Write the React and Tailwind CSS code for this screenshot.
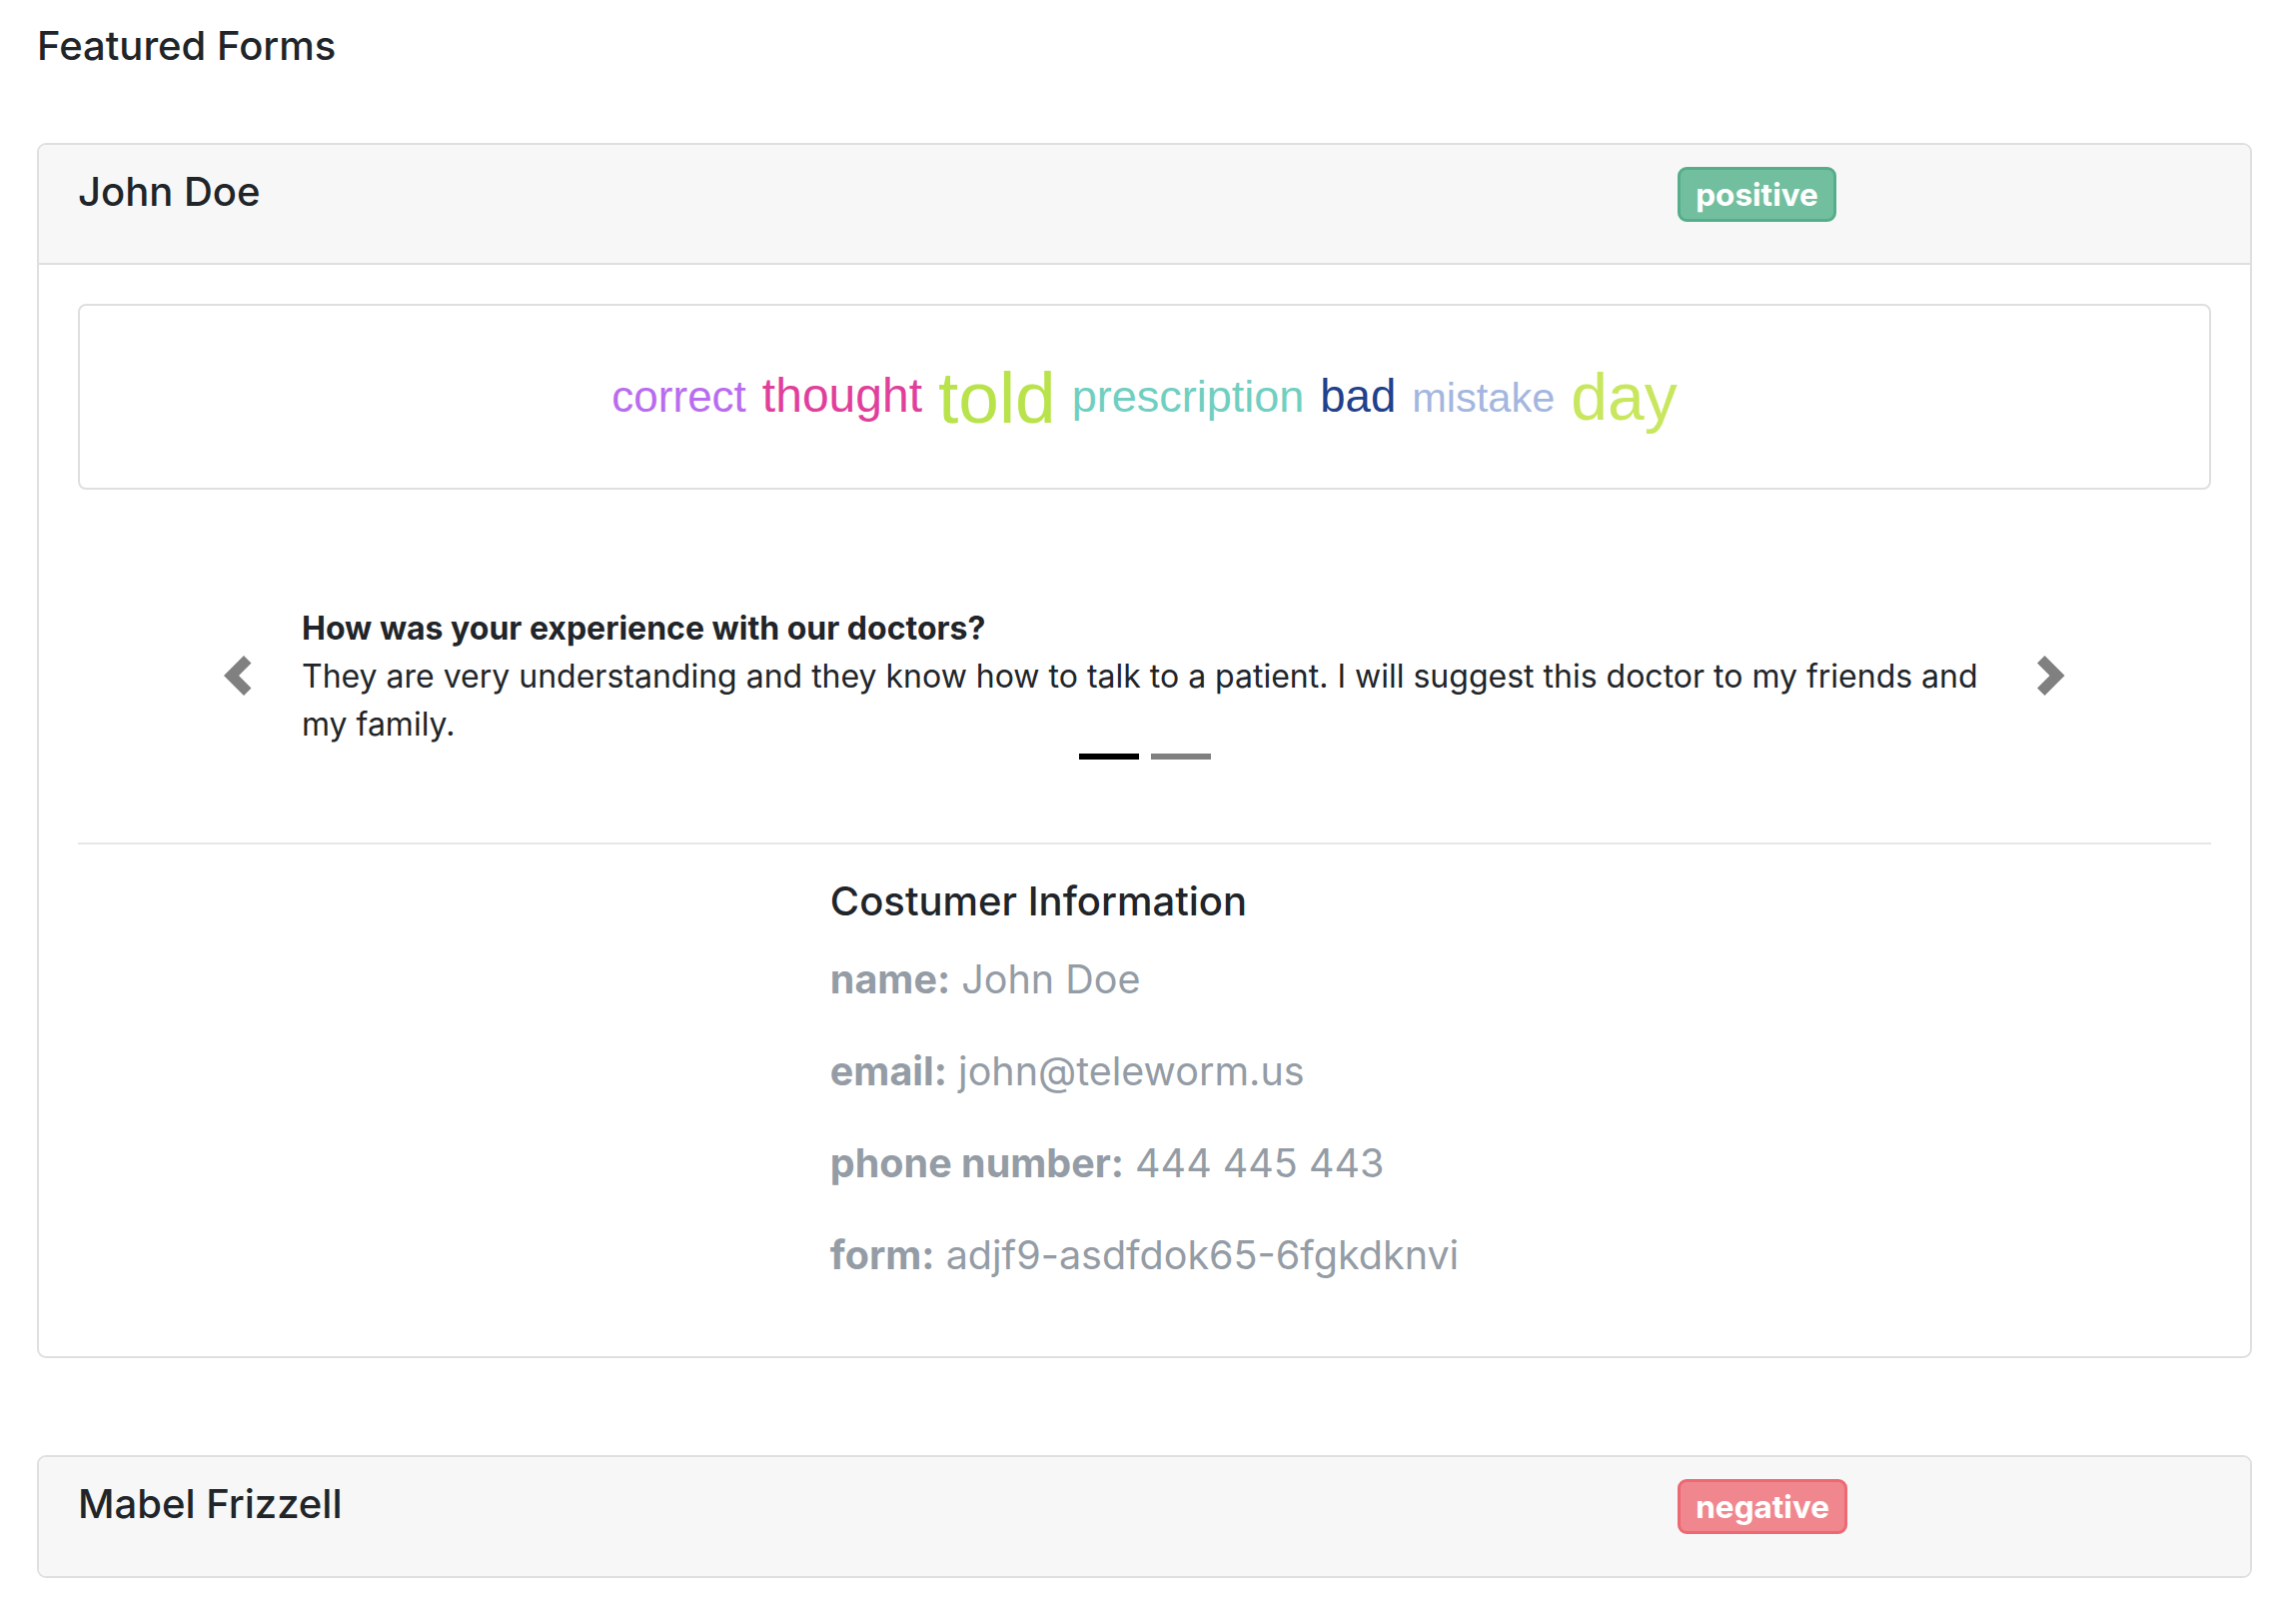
import React from "react";

const words = [
  { text: "correct", size: 44, color: "text-[#b96cf0]", shift: "" },
  { text: "thought", size: 48, color: "text-[#e0409b]", shift: "" },
  { text: "told", size: 73, color: "text-[#b8e34b]", shift: "relative top-[11px]" },
  { text: "prescription", size: 45, color: "text-[#70cfc0]", shift: "" },
  { text: "bad", size: 45.5, color: "text-[#22418c]", shift: "" },
  { text: "mistake", size: 41.5, color: "text-[#a4b6e0]", shift: "" },
  { text: "day", size: 66, color: "text-[#c8e75f]", shift: "relative top-[8px]" },
];

function Chevron({ dir }) {
  const d =
    dir === "left"
      ? "M5.25 0l-4 4 4 4 1.5-1.5L4.25 4l2.5-2.5L5.25 0z"
      : "M2.75 0l-1.5 1.5L3.75 4l-2.5 2.5L2.75 8l4-4-4-4z";
  return (
    <svg viewBox="1.25 0 5.5 8" width="27.5" height="40" fill="#808080">
      <path d={d} />
    </svg>
  );
}

function Badge({ label, tone }) {
  const cls =
    tone === "positive"
      ? "bg-[#72bf9f] border-[#55ae89]"
      : "bg-[#f0878f] border-[#ec6873]";
  return (
    <span
      className={`inline-flex h-[55px] items-center rounded-[9px] border-[3px] px-[15px] text-[31.5px] font-bold text-white ${cls}`}
    >
      {label}
    </span>
  );
}

function CardHeader({ name, tone, bordered }) {
  return (
    <div
      className={`flex items-start bg-[#f7f7f7] px-[39px] pt-[23px] ${
        bordered ? "h-[120px] border-b-2 border-[#dfdfdf]" : "h-[119px]"
      }`}
    >
      <div className="w-3/4 flex-none text-[40px] leading-[48px] font-medium text-[#212529]">
        {name}
      </div>
      <div className="-mt-[1px]">
        <Badge label={tone} tone={tone} />
      </div>
    </div>
  );
}

export default function App() {
  return (
    <div
      className="min-h-screen bg-white pl-[37px] pr-[44px] pt-[22px] pb-[40px] text-[#212529]"
      style={{ fontFamily: "Inter, 'Noto Sans', sans-serif" }}
    >
      <h1 className="mb-[73px] text-[40px] leading-[48px] font-medium">Featured Forms</h1>

      {/* first form */}
      <div className="overflow-hidden rounded-[9px] border-2 border-[#dfdfdf]">
        <CardHeader name="John Doe" tone="positive" bordered />

        <div className="px-[39px] pt-[39px] pb-[78px]">
          {/* word cloud */}
          <div
            className="flex h-[186px] items-center justify-center rounded-[8px] border-2 border-[#dfdfdf] pb-[21px]"
            style={{ fontFamily: "'Liberation Sans', Arial, sans-serif" }}
          >
            <div className="flex items-baseline gap-[16px]">
              {words.map((w) => (
                <span
                  key={w.text}
                  className={`leading-none ${w.color} ${w.shift}`}
                  style={{ fontSize: w.size }}
                >
                  {w.text}
                </span>
              ))}
            </div>
          </div>

          {/* carousel */}
          <div className="relative mt-[65px] px-[224px] pt-[50px] pb-[36px]">
            <div className="text-[32px] leading-[48px]">
              <div className="font-bold">How was your experience with our doctors?</div>
              <div>
                They are very understanding and they know how to talk to a patient. I will
                suggest this doctor to my friends and my family.
              </div>
            </div>
            <div className="mt-[5px] flex justify-center gap-[12px]">
              <span className="h-[6px] w-[60px] bg-black" />
              <span className="h-[6px] w-[60px] bg-[#808080]" />
            </div>
            <button className="absolute top-0 bottom-0 left-0 flex w-[15%] items-center justify-center">
              <Chevron dir="left" />
            </button>
            <button className="absolute top-0 right-0 bottom-0 flex w-[15%] items-center justify-center">
              <Chevron dir="right" />
            </button>
          </div>

          <div className="mt-[47px] h-[2px] bg-[#e6e6e6]" />

          {/* customer info */}
          <div className="mt-[33px] flex justify-center">
            <div>
              <h2 className="mb-[31px] text-[40px] leading-[48px] font-medium">
                Costumer Information
              </h2>
              <div className="flex flex-col gap-[46px] text-[39.5px] leading-[46px] text-[#949ca5]">
                <p>
                  <b className="font-bold">name:</b> John Doe
                </p>
                <p>
                  <b className="font-bold">email:</b> john@teleworm.us
                </p>
                <p>
                  <b className="font-bold">phone number:</b> 444 445 443
                </p>
                <p>
                  <b className="font-bold">form:</b> adjf9-asdfdok65-6fgkdknvi
                </p>
              </div>
            </div>
          </div>
        </div>
      </div>

      {/* second form */}
      <div className="mt-[97px] overflow-hidden rounded-[9px] border-2 border-[#dfdfdf]">
        <CardHeader name="Mabel Frizzell" tone="negative" />
      </div>
    </div>
  );
}
